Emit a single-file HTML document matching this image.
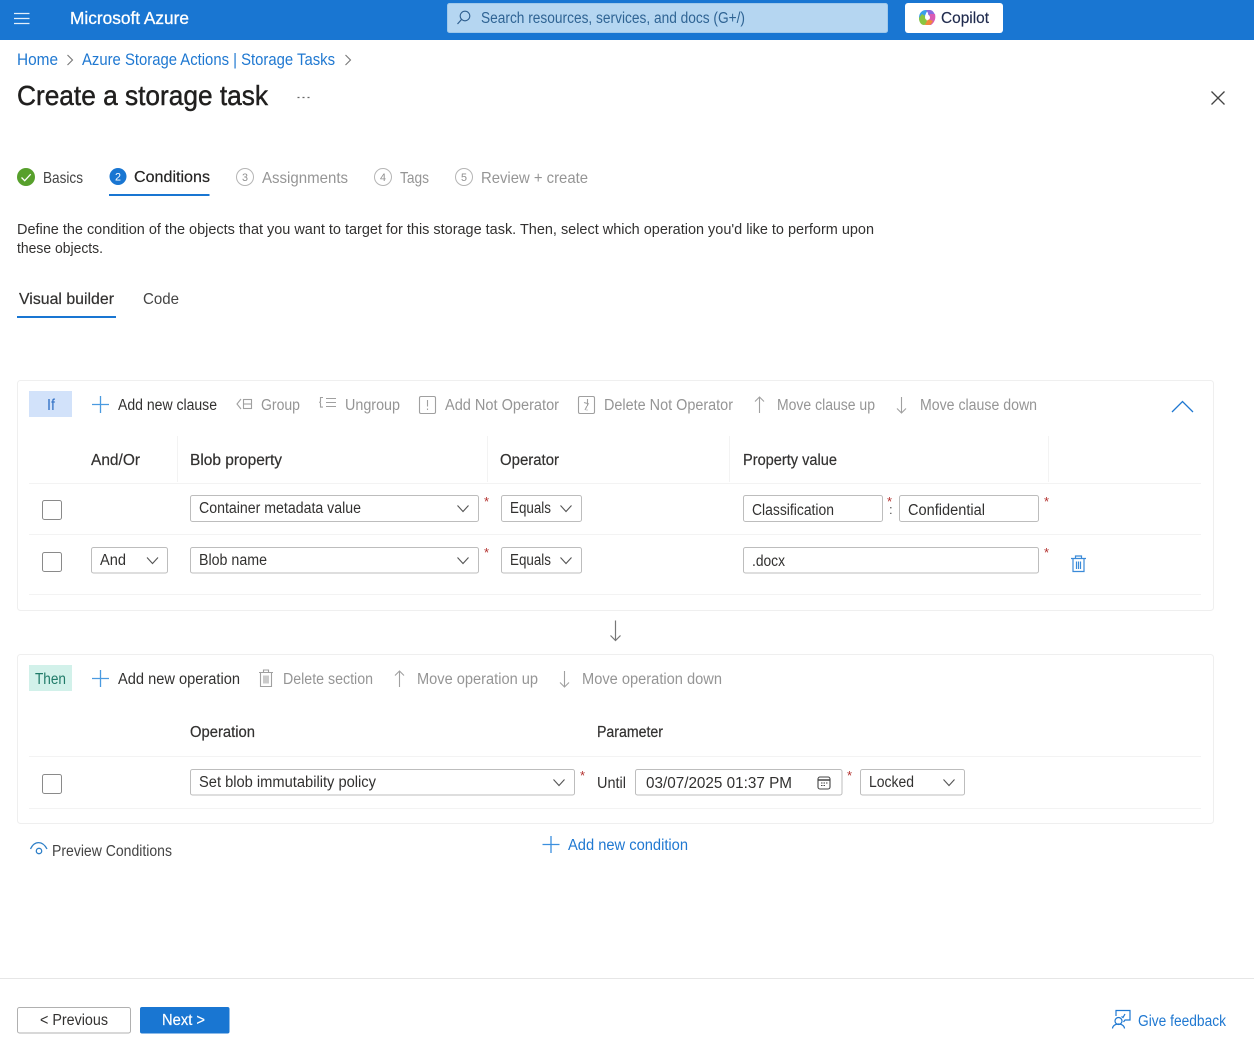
<!DOCTYPE html>
<html lang="en"><head><meta charset="utf-8"><title>Create a storage task</title>
<style>
html,body{margin:0;padding:0;background:#fff;width:1254px;height:1054px;overflow:hidden}
svg{display:block}
text{font-family:"Liberation Sans",sans-serif;font-size:15.500px;fill:#323130}
.g{fill:#959595}.b{fill:#1f78d1}.h{stroke:#323130;stroke-width:.2}
.ln{stroke:#f3f3f3;stroke-width:1;fill:none}
.box{fill:#fff;stroke:#efefef;stroke-width:1}
.inp{fill:#fff;stroke:#bdbdbd;stroke-width:1}
.chev{fill:none;stroke:#555;stroke-width:1.100}
.gi{fill:none;stroke:#a0a0a0;stroke-width:1.100}
.bi{fill:none;stroke:#1f78d1;stroke-width:1.200}
.star{fill:#b3312f;font-size:13px}
</style></head><body>
<svg width="1254" height="1054" viewBox="0 0 1254 1054" xmlns="http://www.w3.org/2000/svg">
<!-- top bar -->
<rect width="1254" height="40" fill="#1976d2"/>
<path d="M14 13.500h15.500M14 18.500h15.500M14 23.500h15.500" stroke="#e3effb" stroke-width="1.300" fill="none"/>
<text x="70" y="24" textLength="119" lengthAdjust="spacingAndGlyphs" style="font-size:17.500px;fill:#fff;stroke:#fff;stroke-width:.3">Microsoft Azure</text>
<rect x="447.500" y="3.500" width="440" height="29" rx="2" fill="#b5d6f1" stroke="#9fc8ea"/>
<circle cx="465" cy="16" r="4.800" fill="none" stroke="#2f5f8f" stroke-width="1.100"/>
<path d="M461.500 19.500L457.500 24" stroke="#2f5f8f" stroke-width="1.200" fill="none"/>
<text x="481" y="23" textLength="264" lengthAdjust="spacingAndGlyphs" style="fill:#2f6494;font-size:15.500px">Search resources, services, and docs (G+/)</text>
<rect x="905" y="3" width="98" height="30" rx="3" fill="#fff"/>
<path d="M919 18c0-5 3-8 7-8h3c-2 1-3 3-4 6l-1 6c-1 3-5 1-5-4z" fill="#3aa0e8"/>
<path d="M919 18c0 4 2 7 5 7 2 0 3-2 3-4l-2-5-3-2z" fill="#8ac53f"/>
<path d="M926 10h4c2 0 4 2 5 5l-4 1c-2 0-3-1-3-3z" fill="#8a6be0"/>
<path d="M935 14c1 4 0 8-4 11h-6c3-1 4-3 4-7l1-4z" fill="#d95bb5"/>
<path d="M925 25h5c1-1 2-2 3-4l-5-2z" fill="#f08a3c"/>
<circle cx="927.500" cy="17.500" r="2.500" fill="#fff"/>
<text x="941" y="23" textLength="48" lengthAdjust="spacingAndGlyphs" style="fill:#1f2a4d;font-size:16px;stroke:#1f2a4d;stroke-width:.15">Copilot</text>

<!-- breadcrumb -->
<text class="b" x="17" y="65" textLength="41" lengthAdjust="spacingAndGlyphs" style="font-size:16.500px">Home</text>
<path d="M67.500 55l5 5-5 5" class="chev" style="stroke:#777"/>
<text class="b" x="82" y="65" textLength="253" lengthAdjust="spacingAndGlyphs" style="font-size:16.500px">Azure Storage Actions | Storage Tasks</text>
<path d="M345.500 55l5 5-5 5" class="chev" style="stroke:#777"/>
<text x="17" y="105" textLength="251" lengthAdjust="spacingAndGlyphs" style="font-size:28px;fill:#201f1e;stroke:#201f1e;stroke-width:.45">Create a storage task</text>
<path d="M297.500 97.500h2M302.500 97.500h2M307.500 97.500h2" stroke="#666" stroke-width="1.200"/>
<path d="M1211.500 91.500l13 13M1224.500 91.500l-13 13" stroke="#444" stroke-width="1.300"/>

<!-- steps -->
<circle cx="26" cy="177" r="9" fill="#57a02c"/>
<path d="M21.500 177.500l3.200 3.200 6-6.500" fill="none" stroke="#fff" stroke-width="1.300"/>
<text x="43" y="183" textLength="40" lengthAdjust="spacingAndGlyphs" style="font-size:16px;fill:#444">Basics</text>
<circle cx="118" cy="176.500" r="8.500" fill="#1976d2"/>
<text x="115" y="180.500" textLength="6" lengthAdjust="spacingAndGlyphs" style="font-size:11px;fill:#fff">2</text>
<text x="134" y="182" textLength="76" lengthAdjust="spacingAndGlyphs" style="font-size:16px;fill:#252423;stroke:#252423;stroke-width:.2">Conditions</text>
<rect x="109" y="194" width="100.500" height="2" fill="#1976d2"/>
<circle cx="245" cy="177" r="8.500" fill="none" stroke="#b5b5b5"/>
<text x="242" y="181" textLength="6" lengthAdjust="spacingAndGlyphs" style="font-size:11px;fill:#8f8f8f">3</text>
<text class="g" x="262" y="183" textLength="86" lengthAdjust="spacingAndGlyphs" style="font-size:16px">Assignments</text>
<circle cx="383" cy="177" r="8.500" fill="none" stroke="#b5b5b5"/>
<text x="380" y="181" textLength="6" lengthAdjust="spacingAndGlyphs" style="font-size:11px;fill:#8f8f8f">4</text>
<text class="g" x="400" y="183" textLength="29" lengthAdjust="spacingAndGlyphs" style="font-size:16px">Tags</text>
<circle cx="464" cy="177" r="8.500" fill="none" stroke="#b5b5b5"/>
<text x="461" y="181" textLength="6" lengthAdjust="spacingAndGlyphs" style="font-size:11px;fill:#8f8f8f">5</text>
<text class="g" x="481" y="183" textLength="107" lengthAdjust="spacingAndGlyphs" style="font-size:16px">Review + create</text>

<!-- description -->
<text x="17" y="234" textLength="857" lengthAdjust="spacingAndGlyphs" style="font-size:15px">Define the condition of the objects that you want to target for this storage task. Then, select which operation you'd like to perform upon</text>
<text x="17" y="253" textLength="86" lengthAdjust="spacingAndGlyphs" style="font-size:15px">these objects.</text>

<!-- tabs -->
<text x="19" y="304" textLength="95" lengthAdjust="spacingAndGlyphs" class="h" style="font-size:16px">Visual builder</text>
<rect x="17" y="316" width="99" height="2" fill="#1976d2"/>
<text x="143" y="304" textLength="36" lengthAdjust="spacingAndGlyphs" style="font-size:16px;fill:#444">Code</text>

<!-- IF section -->
<rect class="box" x="17.500" y="380.500" width="1196" height="230" rx="3"/>
<rect x="29" y="391" width="43" height="26" fill="#d2e2fa"/>
<text x="47" y="410" textLength="8" lengthAdjust="spacingAndGlyphs" style="font-size:16px;fill:#2f6fc4">If</text>
<path d="M100.500 396v17M92 404.500h17" stroke="#4a9ae0" stroke-width="1.300" fill="none"/>
<text x="118" y="410" textLength="99" lengthAdjust="spacingAndGlyphs">Add new clause</text>
<path d="M241 399l-4 5 4 5" class="gi"/><rect class="gi" x="243.500" y="399.500" width="8" height="9"/><path class="gi" d="M243.500 404h8"/>
<text class="g" x="261" y="410" textLength="39" lengthAdjust="spacingAndGlyphs">Group</text>
<path class="gi" d="M323 397.500h-2.500v4l-.8.800.8.800v4h2.500M326 398.500h10M326 402.500h10M326 406.500h10"/>
<text class="g" x="345" y="410" textLength="55" lengthAdjust="spacingAndGlyphs">Ungroup</text>
<rect class="gi" x="419.500" y="396.500" width="16" height="17" rx="1.500"/><path class="gi" d="M427.500 400v6.500M427.500 408.500v1.500"/>
<text class="g" x="445" y="410" textLength="114" lengthAdjust="spacingAndGlyphs">Add Not Operator</text>
<rect class="gi" x="578.500" y="396.500" width="16" height="17" rx="1.500"/><path class="gi" d="M587.500 399v7M584 402.500l5 1.500M585 410l2-4M587 409.500v1"/>
<text class="g" x="604" y="410" textLength="129" lengthAdjust="spacingAndGlyphs">Delete Not Operator</text>
<path class="gi" d="M759.500 397v16M755 401.500l4.500-4.500 4.500 4.500"/>
<text class="g" x="777" y="410" textLength="98" lengthAdjust="spacingAndGlyphs">Move clause up</text>
<path class="gi" d="M901.500 397v16M897 408.500l4.500 4.500 4.500-4.500"/>
<text class="g" x="920" y="410" textLength="117" lengthAdjust="spacingAndGlyphs">Move clause down</text>
<path d="M1172 412l10.500-10.500 10.500 10.500" fill="none" stroke="#1f78d1" stroke-width="1.300"/>

<text x="91" y="465" textLength="49" lengthAdjust="spacingAndGlyphs" class="h">And/Or</text>
<text x="190" y="465" textLength="92" lengthAdjust="spacingAndGlyphs" class="h">Blob property</text>
<text x="500" y="465" textLength="59" lengthAdjust="spacingAndGlyphs" class="h">Operator</text>
<text x="743" y="465" textLength="94" lengthAdjust="spacingAndGlyphs" class="h">Property value</text>
<path class="ln" d="M177.500 436v46M487.500 436v46M729.500 436v46M1048.500 436v46M29 483.500h1172M29 534.500h1172M29 594.500h1172"/>

<rect x="42.500" y="500.500" width="19" height="19" rx="2" fill="#fff" stroke="#8a8a8a"/>
<rect class="inp" x="190.500" y="495.500" width="288" height="26" rx="2"/>
<text x="199" y="513" textLength="162" lengthAdjust="spacingAndGlyphs">Container metadata value</text>
<path class="chev" d="M457.500 505.500l5.500 6 5.500-6"/>
<text class="star" x="484" y="506">*</text>
<rect class="inp" x="501.500" y="495.500" width="80" height="26" rx="2"/>
<text x="510" y="513" textLength="41" lengthAdjust="spacingAndGlyphs">Equals</text>
<path class="chev" d="M560.500 505.500l5.500 6 5.500-6"/>
<rect class="inp" x="743.500" y="495.500" width="139" height="26" rx="2"/>
<text x="752" y="515" textLength="82" lengthAdjust="spacingAndGlyphs">Classification</text>
<text class="star" x="887" y="506">*</text>
<text x="889" y="514" style="font-size:13px;fill:#555">:</text>
<rect class="inp" x="899.500" y="495.500" width="139" height="26" rx="2"/>
<text x="908" y="515" textLength="77" lengthAdjust="spacingAndGlyphs">Confidential</text>
<text class="star" x="1044" y="506">*</text>

<rect x="42.500" y="552.500" width="19" height="19" rx="2" fill="#fff" stroke="#8a8a8a"/>
<rect class="inp" x="91.500" y="547.500" width="76" height="25.500" rx="2"/>
<text x="100" y="565" textLength="26" lengthAdjust="spacingAndGlyphs">And</text>
<path class="chev" d="M147 557.500l5.500 6 5.500-6"/>
<rect class="inp" x="190.500" y="547.500" width="288" height="25.500" rx="2"/>
<text x="199" y="565" textLength="68" lengthAdjust="spacingAndGlyphs">Blob name</text>
<path class="chev" d="M457.500 557.500l5.500 6 5.500-6"/>
<text class="star" x="484" y="557">*</text>
<rect class="inp" x="501.500" y="547.500" width="80" height="25.500" rx="2"/>
<text x="510" y="565" textLength="41" lengthAdjust="spacingAndGlyphs">Equals</text>
<path class="chev" d="M560.500 557.500l5.500 6 5.500-6"/>
<rect class="inp" x="743.500" y="547.500" width="295" height="25.500" rx="2"/>
<text x="752" y="566" textLength="33" lengthAdjust="spacingAndGlyphs">.docx</text>
<text class="star" x="1044" y="557">*</text>
<path class="bi" d="M1071 558.500h15M1073 558.500v13h11v-13M1075.500 558.500v-2.500h6v2.500M1076.500 561.500v7.500M1078.500 561.500v7.500M1080.500 561.500v7.500" style="stroke:#3a8ad8"/>

<path d="M615.500 620.500v20M610.500 635.500l5 5 5-5" fill="none" stroke="#777" stroke-width="1.200"/>

<!-- THEN section -->
<rect class="box" x="17.500" y="654.500" width="1196" height="169" rx="3"/>
<rect x="29" y="665" width="43" height="26" fill="#d2f1ea"/>
<text x="35" y="684" textLength="31" lengthAdjust="spacingAndGlyphs" style="font-size:15.500px;fill:#1f7a68">Then</text>
<path d="M100.500 670v17M92 678.500h17" stroke="#4a9ae0" stroke-width="1.300" fill="none"/>
<text x="118" y="684" textLength="122" lengthAdjust="spacingAndGlyphs">Add new operation</text>
<path class="gi" d="M259 672.500h14M260.500 672.500v14h11v-14M263.500 672.500v-2.500h5v2.500M264 675.500v8M266 675.500v8M268 675.500v8"/>
<text class="g" x="283" y="684" textLength="90" lengthAdjust="spacingAndGlyphs">Delete section</text>
<path class="gi" d="M399.500 671v16M395 675.500l4.500-4.500 4.500 4.500"/>
<text class="g" x="417" y="684" textLength="121" lengthAdjust="spacingAndGlyphs">Move operation up</text>
<path class="gi" d="M564.500 671v16M560 682.500l4.500 4.500 4.500-4.500"/>
<text class="g" x="582" y="684" textLength="140" lengthAdjust="spacingAndGlyphs">Move operation down</text>

<text x="190" y="737" textLength="65" lengthAdjust="spacingAndGlyphs" class="h">Operation</text>
<text x="597" y="737" textLength="66" lengthAdjust="spacingAndGlyphs" class="h">Parameter</text>
<path class="ln" d="M29 756.500h1172M29 808.500h1172"/>

<rect x="42.500" y="774.500" width="19" height="19" rx="2" fill="#fff" stroke="#8a8a8a"/>
<rect class="inp" x="190.500" y="769.500" width="384" height="25.500" rx="2"/>
<text x="199" y="787" textLength="177" lengthAdjust="spacingAndGlyphs">Set blob immutability policy</text>
<path class="chev" d="M553.500 779.500l5.500 6 5.500-6"/>
<text class="star" x="580" y="780">*</text>
<text x="597" y="788" textLength="29" lengthAdjust="spacingAndGlyphs">Until</text>
<rect class="inp" x="635.500" y="769.500" width="206.500" height="25.500" rx="2"/>
<text x="646" y="788" textLength="146" lengthAdjust="spacingAndGlyphs">03/07/2025  01:37  PM</text>
<rect x="818" y="777" width="12" height="12" rx="2" fill="none" stroke="#444" stroke-width="1.100"/>
<path d="M818 780h12" stroke="#444" stroke-width="1.500"/>
<path d="M821 783h1.500M823.500 783h1.500M826 783h1.500M821 785.500h1.500M823.500 785.500h1.500" stroke="#444"/>
<text class="star" x="847" y="780">*</text>
<rect class="inp" x="860.500" y="769.500" width="104" height="25.500" rx="2"/>
<text x="869" y="787" textLength="45" lengthAdjust="spacingAndGlyphs">Locked</text>
<path class="chev" d="M943.500 779.500l5.500 6 5.500-6"/>

<path d="M551 836v17M542.500 844.500h17" stroke="#3b8fde" stroke-width="1.300" fill="none"/>
<text class="b" x="568" y="850" textLength="120" lengthAdjust="spacingAndGlyphs">Add new condition</text>
<path d="M30.500 849c4-8.500 12-8.500 16.500 0" fill="none" stroke="#2f80c8" stroke-width="1.300"/>
<circle cx="39" cy="851" r="2.700" fill="none" stroke="#2f80c8" stroke-width="1.300"/>
<text x="52" y="856" textLength="120" lengthAdjust="spacingAndGlyphs" style="fill:#444">Preview Conditions</text>

<!-- footer -->
<path d="M0 978.500h1254" stroke="#e6e6e6"/>
<rect x="17.500" y="1007.500" width="113" height="25.500" rx="2" fill="#fff" stroke="#b0b0b0"/>
<text x="40" y="1025" textLength="68" lengthAdjust="spacingAndGlyphs">&lt; Previous</text>
<rect x="140" y="1007" width="89.500" height="26.500" rx="2" fill="#1976d2"/>
<text x="162" y="1025" textLength="43" lengthAdjust="spacingAndGlyphs" style="fill:#fff;stroke:#fff;stroke-width:.2">Next &gt;</text>
<path d="M1116 1016v-5.500h14v9.500h-5l-1.500 2" class="bi"/>
<path d="M1125 1014l-2 3.500-1.500-1" class="bi"/>
<circle cx="1118.500" cy="1021" r="3.500" class="bi"/>
<path d="M1112.500 1028.500c.5-6 11.500-6 12 0" class="bi"/>
<text class="b" x="1138" y="1026" textLength="88" lengthAdjust="spacingAndGlyphs">Give feedback</text>
</svg>
</body></html>
